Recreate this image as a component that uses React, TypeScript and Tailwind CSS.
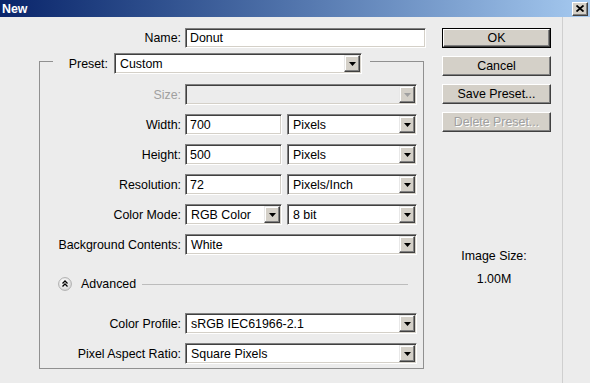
import React from "react";

const sunken =
  "border border-t-[#808080] border-l-[#808080] border-b-white border-r-white shadow-[inset_1px_1px_0_#404040,inset_-1px_-1px_0_#d4d0c8]";

function Arrow({ disabled }: { disabled?: boolean }) {
  return (
    <div className="w-[16px] h-[17px] mr-[1px] shrink-0 bg-[#d4d0c8] border border-t-[#e8e8e8] border-l-[#e8e8e8] border-b-[#404040] border-r-[#404040] shadow-[inset_-1px_-1px_0_#808080,inset_1px_1px_0_#ffffff] flex items-center justify-center">
      <svg width="7" height="4" viewBox="0 0 7 4">
        <polygon points="0,0 7,0 3.5,4" fill={disabled ? "#a0a0a0" : "#000"} />
      </svg>
    </div>
  );
}

function Select({ w, value, disabled }: { w: string; value: string; disabled?: boolean }) {
  return (
    <div className={`${w} h-[21px] flex items-center ${disabled ? "bg-[#ececec]" : "bg-white"} ${sunken}`}>
      <span className="flex-1 pl-[5px] whitespace-nowrap overflow-hidden">{value}</span>
      <Arrow disabled={disabled} />
    </div>
  );
}

function Input({ w, value, h = "h-[21px]" }: { w: string; value: string; h?: string }) {
  return (
    <div className={`${w} ${h} flex items-center bg-white ${sunken}`}>
      <span className="pl-[4px]">{value}</span>
    </div>
  );
}

function Row({ label, children, gray, mt }: { label: string; children: React.ReactNode; gray?: boolean; mt: string }) {
  return (
    <div className={`flex items-center h-[21px] ${mt}`}>
      <span className={`w-[145px] pr-[4px] text-right whitespace-nowrap ${gray ? "text-[#a0a0a0]" : "text-black"}`}>{label}</span>
      {children}
    </div>
  );
}

function Button({ label, def, disabled, mt }: { label: string; def?: boolean; disabled?: boolean; mt?: string }) {
  if (def) {
    return (
      <div className={`w-[109px] h-[20px] border border-black ${mt ?? ""}`}>
        <div className="w-full h-full bg-[#d4d0c8] border border-t-white border-l-white border-b-[#404040] border-r-[#404040] shadow-[inset_-1px_-1px_0_#808080] flex items-center justify-center">
          OK
        </div>
      </div>
    );
  }
  return (
    <div
      className={`w-[109px] h-[20px] bg-[#d4d0c8] border border-t-white border-l-white border-b-[#404040] border-r-[#404040] shadow-[inset_-1px_-1px_0_#808080] flex items-center justify-center ${mt ?? ""} ${disabled ? "text-[#a0a0a0] [text-shadow:1px_1px_0_#ffffff]" : "text-black"}`}
    >
      {label}
    </div>
  );
}

export default function App() {
  return (
    <div className="w-[590px] h-[383px] overflow-hidden bg-[#ececec] text-[12.4px] leading-[14px] text-black font-['Liberation_Sans',Arial,sans-serif] flex flex-col">
      {/* Title bar */}
      <div className="h-[17px] shrink-0 flex items-center bg-gradient-to-r from-[#0a246a] to-[#a6caf0]">
        <span className="pl-[2px] font-bold text-white flex-1">New</span>
        <div className="w-[16px] h-[14px] mr-[2px] bg-[#d4d0c8] border border-t-white border-l-white border-b-[#404040] border-r-[#404040] shadow-[inset_-1px_-1px_0_#808080] flex items-center justify-center">
          <svg width="8" height="7" viewBox="0 0 8 7">
            <path d="M0.5 0.5 L7.5 6.5 M7.5 0.5 L0.5 6.5" stroke="#000" strokeWidth="1.8" />
          </svg>
        </div>
      </div>

      <div className="flex flex-1">
        <div className="w-[563px] border-r border-[#cfcfcf] flex">
          {/* Form */}
          <div className="w-[442px]">
            <div className="flex items-center h-[20px] mt-[11px]">
              <span className="w-[185px] pr-[4px] text-right">Name:</span>
              <Input w="w-[241px]" h="h-[20px]" value="Donut" />
            </div>

            <fieldset className="ml-[39px] w-[385px] border border-[#909090] pb-[4px]">
              <legend className="ml-[13px] pt-[5px] pr-[8px] flex items-center">
                <span className="w-[61px] pr-[6px] text-right">Preset:</span>
                <Select w="w-[248px]" value="Custom" />
              </legend>

              <Row label="Size:" gray mt="mt-[10px]">
                <Select w="w-[232px]" value="" disabled />
              </Row>
              <Row label="Width:" mt="mt-[9px]">
                <Input w="w-[97px]" value="700" />
                <div className="ml-[5px]">
                  <Select w="w-[130px]" value="Pixels" />
                </div>
              </Row>
              <Row label="Height:" mt="mt-[9px]">
                <Input w="w-[97px]" value="500" />
                <div className="ml-[5px]">
                  <Select w="w-[130px]" value="Pixels" />
                </div>
              </Row>
              <Row label="Resolution:" mt="mt-[9px]">
                <Input w="w-[97px]" value="72" />
                <div className="ml-[5px]">
                  <Select w="w-[130px]" value="Pixels/Inch" />
                </div>
              </Row>
              <Row label="Color Mode:" mt="mt-[9px]">
                <Select w="w-[97px]" value="RGB Color" />
                <div className="ml-[5px]">
                  <Select w="w-[130px]" value="8 bit" />
                </div>
              </Row>
              <Row label="Background Contents:" mt="mt-[9px]">
                <Select w="w-[232px]" value="White" />
              </Row>

              <div className="flex items-center h-[18px] mt-[20px]">
                <div className="ml-[18px] w-[14px] h-[14px] shrink-0">
                  <svg width="14" height="14" viewBox="0 0 14 14">
                    <defs>
                      <radialGradient id="g" cx="0.4" cy="0.35" r="0.7">
                        <stop offset="0" stopColor="#ffffff" />
                        <stop offset="1" stopColor="#d6d6d6" />
                      </radialGradient>
                    </defs>
                    <circle cx="7" cy="7" r="6.4" fill="url(#g)" stroke="#a8a8a8" strokeWidth="0.9" />
                    <path d="M4.5 6.5 L7 4 L9.5 6.5 M4.5 9.5 L7 7 L9.5 9.5" fill="none" stroke="#000" strokeWidth="1.3" />
                  </svg>
                </div>
                <span className="ml-[9px]">Advanced</span>
                <div className="ml-[6px] w-[266px] border-t border-[#bcbcbc]" />
              </div>

              <Row label="Color Profile:" mt="mt-[20px]">
                <Select w="w-[232px]" value="sRGB IEC61966-2.1" />
              </Row>
              <Row label="Pixel Aspect Ratio:" mt="mt-[9px]">
                <Select w="w-[232px]" value="Square Pixels" />
              </Row>
            </fieldset>
          </div>

          {/* Buttons */}
          <div className="w-[109px] pt-[11px] flex flex-col">
            <Button label="OK" def />
            <Button label="Cancel" mt="mt-[8px]" />
            <Button label="Save Preset..." mt="mt-[8px]" />
            <Button label="Delete Preset..." disabled mt="mt-[8px]" />
            <div className="mt-[117px] text-center pr-[5px]">Image Size:</div>
            <div className="mt-[9px] text-center pr-[5px]">1.00M</div>
          </div>
        </div>
        <div className="flex-1" />
      </div>
    </div>
  );
}
